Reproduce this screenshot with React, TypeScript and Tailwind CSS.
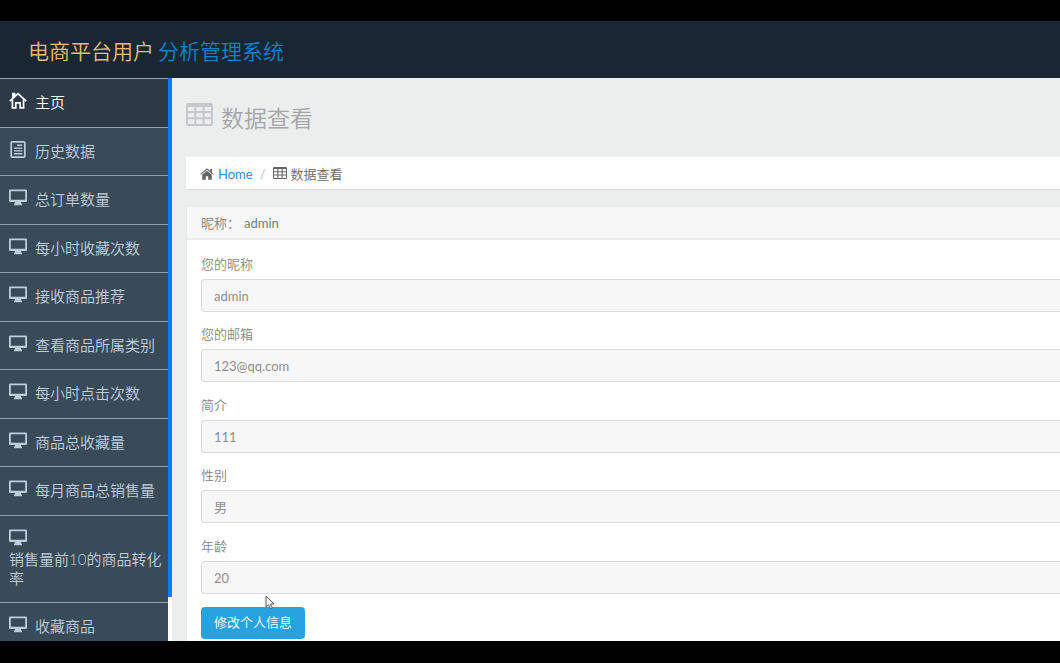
import React from "react";

type IconProps = { className?: string };

function HouseIcon({ className }: IconProps) {
  return (
    <svg viewBox="0 0 18 17" className={className} fill="none" stroke="currentColor" strokeWidth="1.7" aria-hidden="true">
      <path d="M0.8 9.2 9 1.6l8.2 7.6" />
      <path d="M3.4 7.5v8.400h3.400v-5.100h4.400v5.100h3.400V7.500" />
      <path d="M3.900 6.200V1.600h1.700v2.600" />
    </svg>
  );
}

function DocumentIcon({ className }: IconProps) {
  return (
    <svg viewBox="0 0 18 18" className={className} fill="none" stroke="currentColor" aria-hidden="true">
      <rect x="1.800" y="0.900" width="14.400" height="16.200" rx="1" strokeWidth="1.800" />
      <path d="M8 4.500h5.500M4.800 7.500h8.700M4.800 10.500h8.700M4.800 13.500h8.700" strokeWidth="1.400" />
    </svg>
  );
}

function DesktopIcon({ className }: IconProps) {
  return (
    <svg viewBox="0 0 18 16" className={className} fill="currentColor" aria-hidden="true">
      <path
        fillRule="evenodd"
        d="M1.200 0h15.600Q18 0 18 1.200v10.100q0 1.200-1.200 1.200H12V14h1v1.800H5V14h1v-1.500H1.200Q0 12.500 0 11.300V1.200Q0 0 1.200 0ZM1.800 1.800v8.400h14.400V1.800Z"
      />
    </svg>
  );
}

function TableIcon({ className }: IconProps) {
  return (
    <svg viewBox="0 0 27 23" className={className} fill="currentColor" aria-hidden="true">
      <path
        fillRule="evenodd"
        d="M2 0h23q2 0 2 2v19q0 2-2 2H2q-2 0-2-2V2q0-2 2-2ZM2 4v4h6.300V4ZM10.400 4v4h6.200V4ZM18.700 4v4H25V4ZM2 10v4.300h6.300V10ZM10.400 10v4.300h6.200V10ZM18.700 10v4.300H25V10ZM2 16.300V21h6.300v-4.700ZM10.400 16.300V21h6.200v-4.700ZM18.700 16.300V21H25v-4.700Z"
      />
    </svg>
  );
}

function HomeIcon({ className }: IconProps) {
  return (
    <svg viewBox="0 0 14 12" className={className} fill="currentColor" aria-hidden="true">
      <path d="M7 2.800 2.200 6.800v4.400q0 .6.600.6h3V8.200h2.400v3.600h3q.6 0 .6-.6V6.800Z" />
      <path d="M13.800 6 12 4.500V1h-1.800v1.900L7.700.8q-.7-.5-1.400 0L.2 6l.7.8L7 1.800l6.100 5Z" />
    </svg>
  );
}

const menu = [
  { label: "主页", Icon: HouseIcon },
  { label: "历史数据", Icon: DocumentIcon },
  { label: "总订单数量", Icon: DesktopIcon },
  { label: "每小时收藏次数", Icon: DesktopIcon },
  { label: "接收商品推荐", Icon: DesktopIcon },
  { label: "查看商品所属类别", Icon: DesktopIcon },
  { label: "每小时点击次数", Icon: DesktopIcon },
  { label: "商品总收藏量", Icon: DesktopIcon },
  { label: "每月商品总销售量", Icon: DesktopIcon },
  { label: "销售量前10的商品转化率", Icon: DesktopIcon, wrap: true },
  { label: "收藏商品", Icon: DesktopIcon },
];

const fields = [
  { id: "nickname", label: "您的昵称", value: "admin" },
  { id: "email", label: "您的邮箱", value: "123@qq.com" },
  { id: "intro", label: "简介", value: "111" },
  { id: "gender", label: "性别", value: "男" },
  { id: "age", label: "年龄", value: "20" },
];

function Sidebar() {
  return (
    <nav className="flex w-[172px] shrink-0 items-start bg-[#eceeee]">
      <ul className="min-h-full w-[168px] bg-[#394a59] text-[15px] font-[350] text-[#c0ced9]">
        {menu.map(({ label, Icon, wrap }, i) => (
          <li
            key={label}
            className={
              (i === 0 ? "bg-[#2b3a46] text-white " : "") +
              (wrap ? "h-[87px]" : "h-12 odd:h-[49px]") +
              " border-t border-[#93a3ab]"
            }
          >
            <a
              href="#"
              className={
                wrap
                  ? "flex h-full flex-col pt-[13px] pl-[9px] leading-[19px]"
                  : "flex h-full items-center gap-2 pb-px pl-[9px]"
              }
            >
              <Icon className="mb-1 h-[17px] w-[18px] shrink-0" />
              <span>{label}</span>
            </a>
          </li>
        ))}
      </ul>
      <div className="h-full w-1 bg-white">
        <div className="h-[519px] w-full bg-[#0a7cff]" />
      </div>
    </nav>
  );
}

export default function App() {
  return (
    <div className="flex h-screen flex-col overflow-hidden border-t-[21px] border-b-[22px] border-black bg-[#eceeee] font-['Lato','Noto_Sans_CJK_SC',sans-serif]">
      <header className="flex h-[57px] shrink-0 items-center bg-[#182733] pl-7">
        <h1 className="flex gap-1 pt-[3px] text-[21px] font-[350] text-[#e8bd6c]">
          <span>电商平台用户</span>
          <span className="text-[#0a84cc]">分析管理系统</span>
        </h1>
      </header>

      <div className="flex min-h-0 flex-1 overflow-hidden">
        <Sidebar />
        <main className="min-w-0 flex-1 overflow-hidden pl-[14px]">
          <h2 className="flex h-[79px] items-center gap-2 pt-px text-[23px] font-[350] text-[#a3a5a6]">
            <TableIcon className="mb-2 h-[23px] w-[27px] text-[#c5c9cb]" />
            数据查看
          </h2>

          <ol className="flex h-8 items-center bg-white pt-[3px] pl-[14px] text-[13px] text-[#666] shadow-[0_1px_1px_#dddddd]">
            <li className="flex items-center gap-1">
              <HomeIcon className="mb-px h-3 w-[14px]" />
              <a href="#" className="text-[#2a8fe0]">Home</a>
            </li>
            <li className="px-[7px] text-[#bbb]">/</li>
            <li className="flex items-center gap-1 font-[350]">
              <TableIcon className="mb-[3px] h-3 w-[14px]" />
              数据查看
            </li>
          </ol>

          <section className="mt-[18px] border-l border-[#e6e8e8] bg-white">
            <h3 className="flex h-[33px] items-center gap-1 border-b-2 border-[#ececec] bg-[#f7f7f7] pt-[3px] pl-[14px] text-[13px] text-[#6b827d]">
              <span className="font-[350]">昵称：</span>
              <span>admin</span>
            </h3>
            <form className="pt-[14px] pl-[14px]" onSubmit={(e) => e.preventDefault()}>
              {fields.map((f) => (
                <div key={f.id} className="h-[71px] odd:h-[70px]">
                  <label htmlFor={f.id} className="block h-[25px] text-[13px] leading-5 font-[350] text-[#858585]">
                    {f.label}
                  </label>
                  <input
                    id={f.id}
                    defaultValue={f.value}
                    className="block h-[33px] w-full rounded-l border border-r-0 border-[#d8dadb] bg-[#f7f7f7] px-3 text-[13px] text-[#8e8e8e] outline-none"
                  />
                </div>
              ))}
              <div className="relative pt-px pb-4">
                <button type="submit" className="block h-8 rounded bg-[#27a2df] px-[13px] text-[13px] font-[350] text-white">
                  修改个人信息
                </button>
                <svg viewBox="0 0 10 15" className="absolute -top-[11px] left-16 h-[15px] w-[10px]" aria-hidden="true">
                  <path d="M1 1v11l2.600-2.300 1.800 4 1.900-.8-1.800-3.900H9Z" fill="#fff" stroke="#555" />
                </svg>
              </div>
            </form>
          </section>
        </main>
      </div>
    </div>
  );
}
